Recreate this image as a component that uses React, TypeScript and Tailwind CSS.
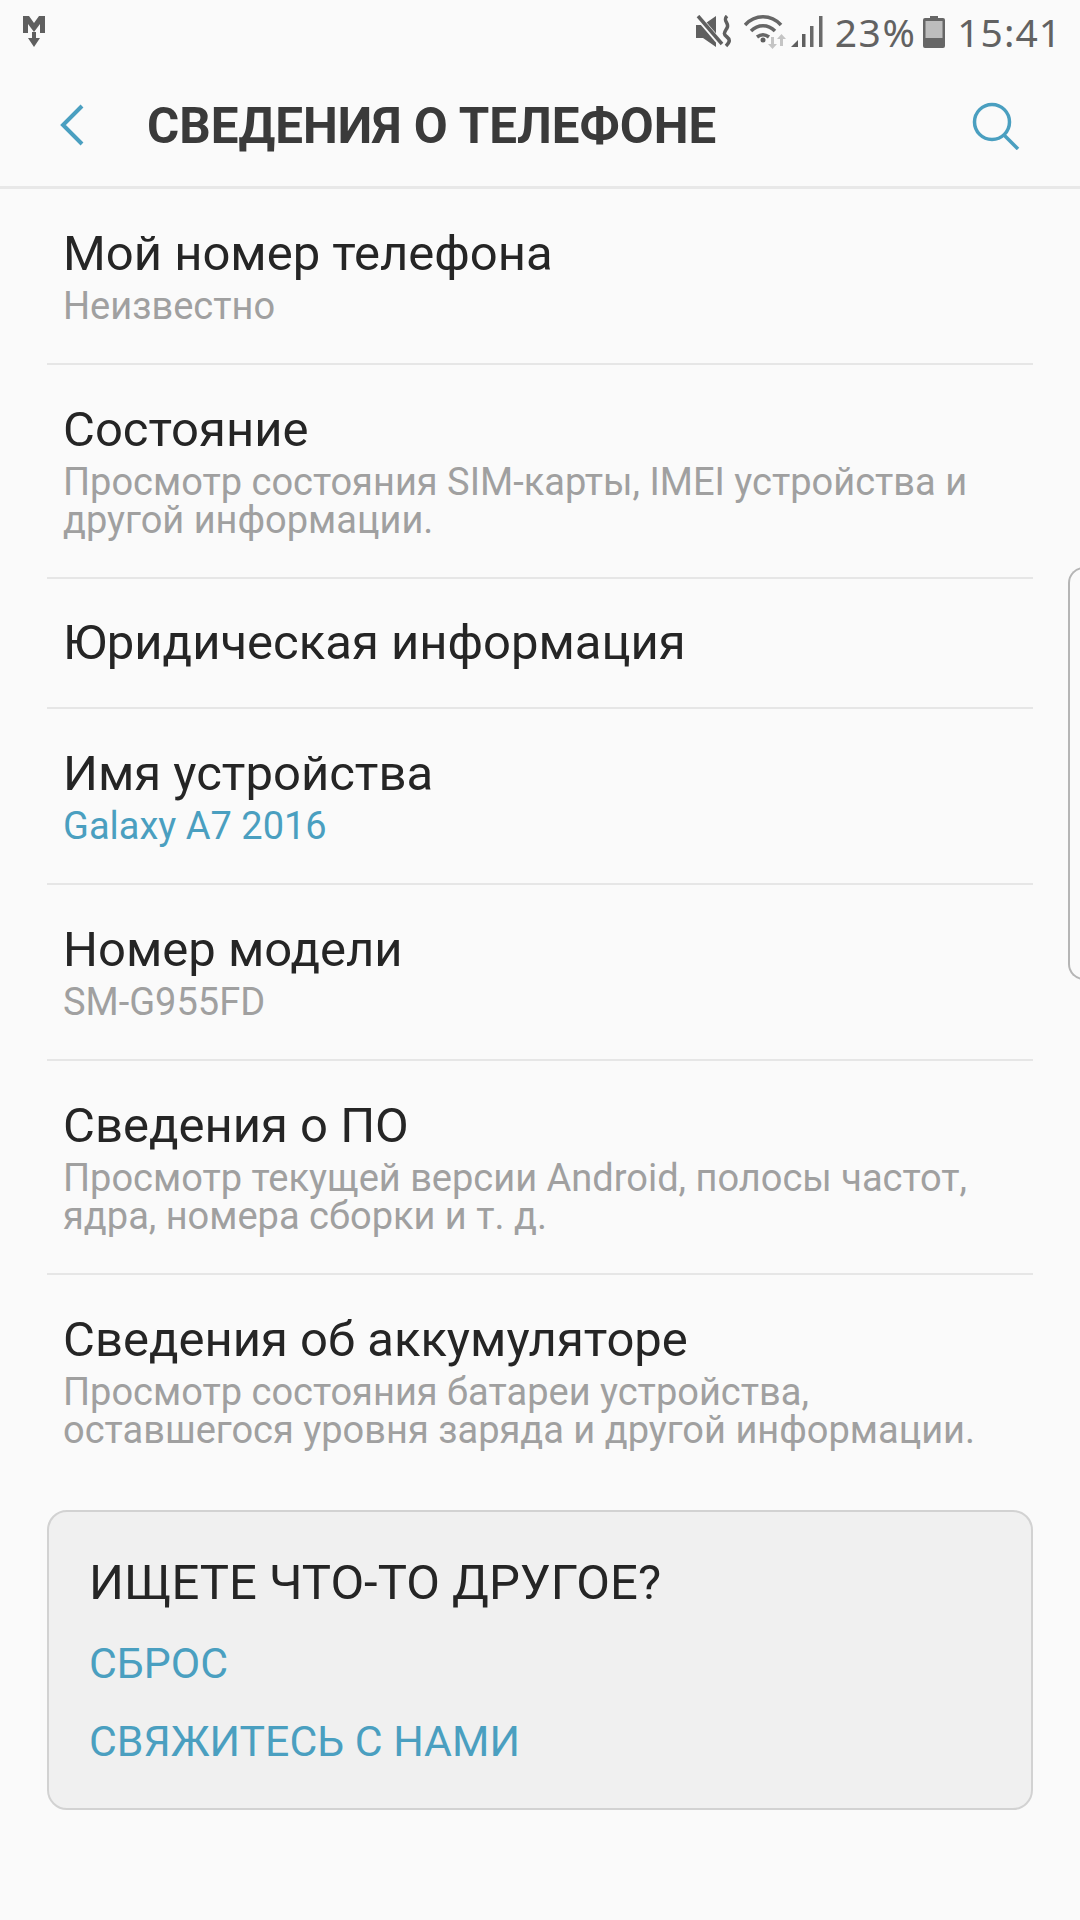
const font = { fontFamily: "Roboto, sans-serif" };

function Item({ title, sub, lines = [], h, blue, divider = true, extra = "" }: { title: string; sub?: string; lines?: string[]; h: string; blue?: boolean; divider?: boolean; extra?: string }) {
  const all = sub ? [sub] : lines;
  return (
    <div className={`${h} ${extra} mx-[47px] px-[16px] flex flex-col justify-center ${divider ? "border-b-2 border-[#e6e6e6]" : ""}`}>
      <div className="text-[49px] leading-[54px] text-[#252525] whitespace-nowrap">{title}</div>
      {all.length > 0 && (
        <div className={`text-[38px] leading-[38px] mt-[6px] ${blue ? "text-[#4a9fc0]" : "text-[#a0a0a0]"}`}>
          {all.map((l) => (
            <div key={l} className="whitespace-nowrap">{l}</div>
          ))}
        </div>
      )}
    </div>
  );
}

function StatusIcons() {
  return (
    <div className="flex items-center">
      <svg width="36" height="33" viewBox="0 0 36 33" className="mr-[12px]">
        <path d="M0 10h7l13-9v31L7 23H0z" fill="#5f5f5f" />
        <path d="M2 2l24 28" stroke="#fafafa" strokeWidth="6" />
        <path d="M2 1l24 28" stroke="#5f5f5f" strokeWidth="3.500" />
        <path d="M31 1c-5 5 3 7 0 12s-4 6 0 9 2 6-1 9" stroke="#5f5f5f" strokeWidth="3.500" fill="none" />
      </svg>
      <svg width="42" height="34" viewBox="0 0 42 34" className="mr-[5px]">
        <path d="M1 10c10-11 26-11 36 0" stroke="#666666" strokeWidth="3.500" fill="none" />
        <path d="M7 16c7-7 17-7 24 0" stroke="#666666" strokeWidth="3.500" fill="none" />
        <path d="M13 22c4-3 8-3 12 0" stroke="#666666" strokeWidth="3.500" fill="none" />
        <circle cx="19" cy="25" r="2.5" fill="#5f5f5f" />
        <path d="M24 29l4.500 5 4.500-5h-3v-7h-3v7z" fill="#c4c4c4" />
        <path d="M33 24l4.500-5 4.500 5h-3v7h-3v-7z" fill="#c4c4c4" />
      </svg>
      <svg width="34" height="33" viewBox="0 0 34 33" className="mr-[10px]">
        <path d="M0 32L7 25V32z" fill="#5f5f5f" />
        <rect x="11" y="19" width="3.500" height="13" fill="#5f5f5f" />
        <rect x="19" y="11" width="3.500" height="21" fill="#6a6a6a" />
        <rect x="28" y="1" width="3.500" height="31" fill="#6a6a6a" />
      </svg>
      <span className="text-[39px] leading-none text-[#626262] mr-[7px] tracking-[1.5px]" style={{ fontFamily: "'Noto Sans', sans-serif" }}>23%</span>
      <svg width="22" height="32" viewBox="0 0 22 32" className="mr-[12px]">
        <path d="M7 0h8v2h5a2 2 0 0 1 2 2v26a2 2 0 0 1-2 2H2a2 2 0 0 1-2-2V4a2 2 0 0 1 2-2h5z" fill="#666" />
        <rect x="2.500" y="5" width="17" height="17" fill="#bdbdbd" />
      </svg>
      <span className="text-[39px] leading-none text-[#626262] tracking-[1px]" style={{ fontFamily: "'Noto Sans', sans-serif" }}>15:41</span>
    </div>
  );
}

export default function App() {
  return (
    <div className="relative w-[1080px] h-[1920px] bg-[#fafafa] overflow-hidden" style={font}>
      <div className="h-[63px] pl-[22px] pr-[18px] flex items-center justify-between">
        <svg width="24" height="33" viewBox="0 0 24 33">
          <path d="M1 1h6l5 7 5-7h6v17h-5V9l-6 8-6-8v9H1z" fill="#5f5f5f" />
          <path d="M10 17h4v6h4l-6 9-6-9h4z" fill="#5f5f5f" />
        </svg>
        <StatusIcons />
      </div>
      <div className="h-[126px] border-b-[3px] border-[#e8e8e8] flex items-center pl-[60px] pr-[60px]">
        <svg width="24" height="42" viewBox="0 0 24 42" className="shrink-0">
          <path d="M22 2L3 21l19 19" stroke="#4a9fc0" strokeWidth="4" fill="none" />
        </svg>
        <div className="ml-[63px] flex-1 text-[49.3px] leading-[56px] pt-[2px] font-bold text-[#3a3a3a] whitespace-nowrap">СВЕДЕНИЯ О ТЕЛЕФОНЕ</div>
        <svg width="48" height="48" viewBox="0 0 48 48" className="shrink-0 mt-[2px]">
          <circle cx="20" cy="20" r="17.500" stroke="#4a9fc0" strokeWidth="3.500" fill="none" />
          <path d="M32 33l14 14" stroke="#4a9fc0" strokeWidth="3.500" fill="none" />
        </svg>
      </div>
      <Item h="h-[176px]" title="Мой номер телефона" sub="Неизвестно" />
      <Item h="h-[214px]" title="Состояние" lines={["Просмотр состояния SIM-карты, IMEI устройства и", "другой информации."]} />
      <Item h="h-[130px]" title="Юридическая информация" />
      <Item h="h-[176px]" title="Имя устройства" sub="Galaxy A7 2016" blue />
      <Item h="h-[176px]" title="Номер модели" sub="SM-G955FD" />
      <Item h="h-[214px]" title="Сведения о ПО" lines={["Просмотр текущей версии Android, полосы частот,", "ядра, номера сборки и т. д."]} />
      <Item h="h-[214px]" extra="pb-[2px]" divider={false} title="Сведения об аккумуляторе" lines={["Просмотр состояния батареи устройства,", "оставшегося уровня заряда и другой информации."]} />
      <div className="mt-[21px] mx-[47px] h-[300px] rounded-[20px] border-2 border-[#d2d2d2] bg-[#f0f0f0] px-[40px] pt-[44px]">
        <div className="text-[49px] leading-[54px] text-[#252525] whitespace-nowrap">ИЩЕТЕ ЧТО-ТО ДРУГОЕ?</div>
        <div className="mt-[28px] text-[42.8px] leading-[50px] text-[#4a9fc0]">СБРОС</div>
        <div className="mt-[28px] text-[42.8px] leading-[50px] text-[#4a9fc0]">СВЯЖИТЕСЬ С НАМИ</div>
      </div>
      <div className="absolute left-[1068px] top-[567px] w-[20px] h-[413px] rounded-l-[16px] border-l-2 border-y-2 border-[#b5b5b5]" />
    </div>
  );
}
